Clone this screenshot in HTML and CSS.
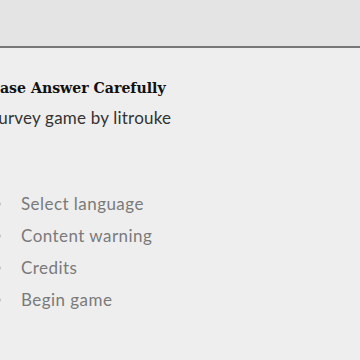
FILE: index.html
```html
<!DOCTYPE html>
<html lang="en">
<head>
  <meta charset="UTF-8">
  <title>Please Answer Carefully</title>
  <link rel="stylesheet" href="styles.css">
</head>
<body>
  <div class="topbar"></div>

  <div class="main">
    <div class="intro">
      <h1>Please Answer Carefully</h1>
      <p>A survey game by litrouke</p>
    </div>

    <ul class="menu">
      <li>Select language</li>
      <li>Content warning</li>
      <li>Credits</li>
      <li>Begin game</li>
    </ul>
  </div>
</body>
</html>
```

FILE: styles.css
```css
* {
  margin: 0;
  padding: 0;
  box-sizing: border-box;
}

body {
  width: 360px;
  height: 360px;
  overflow: hidden;
  background: #eeeeee;
  font-family: Lato, 'Open Sans', sans-serif;
}

.topbar {
  height: 48px;
  background: #e4e4e4;
  border-bottom: 2px solid #777777;
}

.main {
  margin-left: -25px;
}

.intro {
  padding-top: 28px;
}

.intro h1 {
  font-family: 'DejaVu Serif Condensed', 'DejaVu Serif', serif;
  font-size: 15.7px;
  font-weight: 700;
  color: #111111;
  line-height: 24px;
}

.intro p {
  font-size: 17px;
  letter-spacing: 0.2px;
  color: #333333;
  line-height: 24px;
  margin-top: 6px;
}

.menu {
  list-style: none;
  margin-top: 58px;
  padding-left: 22px;
  color: #7a7a7a;
  font-size: 17px;
  letter-spacing: 0.45px;
}

.menu li {
  display: flex;
  align-items: center;
  gap: 20px;
  line-height: 32px;
}

.menu li::before {
  content: '';
  width: 4px;
  height: 4px;
  border-radius: 50%;
  background: #c4c4c4;
}
```
